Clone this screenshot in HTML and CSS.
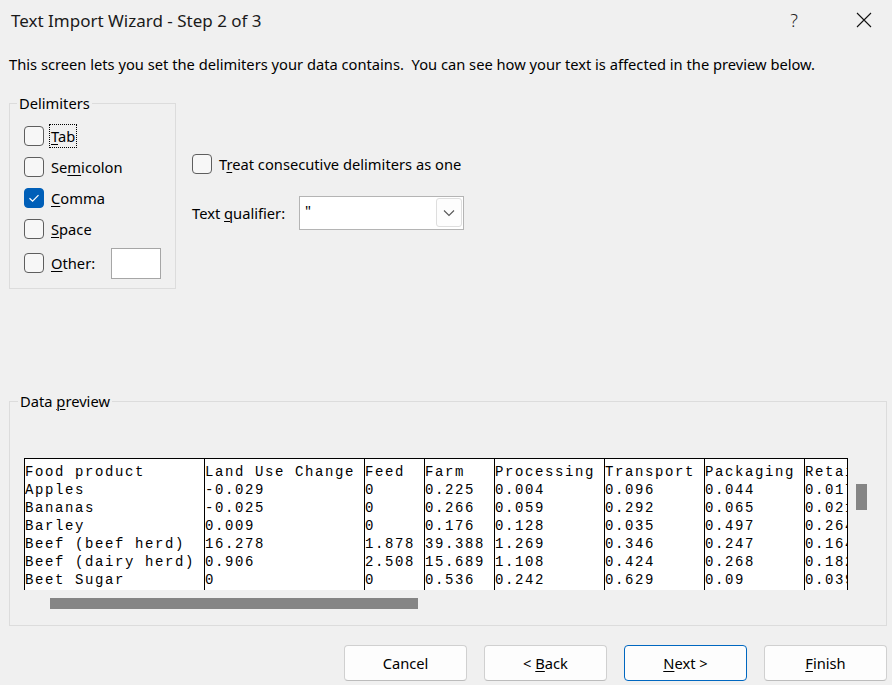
FILE: index.html
```html
<!DOCTYPE html>
<html>
<head>
<meta charset="utf-8">
<title>Text Import Wizard</title>
<link rel="stylesheet" href="styles.css">
</head>
<body>
<header class="titlebar">
  <span class="title">Text Import Wizard - Step 2 of 3</span>
  <div class="tb-buttons">
    <span class="tb-btn help">?</span>
    <span class="tb-btn">
      <svg class="close-icon" width="16" height="16" viewBox="0 0 16 16"><path d="M1 1L15 15M15 1L1 15"/></svg>
    </span>
  </div>
</header>

<p class="intro">This screen lets you set the delimiters your data contains.&nbsp; You can see how your text is affected in the preview below.</p>

<div class="options">
  <fieldset class="group delims">
    <legend>Delimiters</legend>
    <div class="group-body delims-body">
      <div class="row"><span class="cb"></span><span class="lbl focus"><u>T</u>ab</span></div>
      <div class="row"><span class="cb"></span><span class="lbl">Se<u>m</u>icolon</span></div>
      <div class="row"><span class="cb checked"><svg width="20" height="20" viewBox="0 0 20 20"><path d="M5.5 10.2L8.6 13.2L14.5 7.2"/></svg></span><span class="lbl"><u>C</u>omma</span></div>
      <div class="row"><span class="cb"></span><span class="lbl"><u>S</u>pace</span></div>
      <div class="row other-row"><span class="cb"></span><span class="lbl"><u>O</u>ther:</span><span class="textbox"></span></div>
    </div>
  </fieldset>

  <div class="right-col">
    <div class="row treat-row"><span class="cb"></span><span class="lbl">T<u>r</u>eat consecutive delimiters as one</span></div>
    <div class="qual-row">
      <span class="qual-label">Text <u>q</u>ualifier:</span>
      <div class="combo">
        <span class="combo-val">"</span>
        <span class="combo-drop"><svg width="12" height="8" viewBox="0 0 12 8"><path d="M1 1.5L6 6.5L11 1.5"/></svg></span>
      </div>
    </div>
  </div>
</div>

<fieldset class="group preview">
  <legend>Data <u>p</u>review</legend>
  <div class="group-body preview-body">
    <div class="preview-grid">
      <div class="table">
        <div class="col c1">Food product<br>Apples<br>Bananas<br>Barley<br>Beef (beef herd)<br>Beef (dairy herd)<br>Beet Sugar</div>
        <div class="col c2">Land Use Change<br>-0.029<br>-0.025<br>0.009<br>16.278<br>0.906<br>0</div>
        <div class="col c3">Feed<br>0<br>0<br>0<br>1.878<br>2.508<br>0</div>
        <div class="col c4">Farm<br>0.225<br>0.266<br>0.176<br>39.388<br>15.689<br>0.536</div>
        <div class="col c5">Processing<br>0.004<br>0.059<br>0.128<br>1.269<br>1.108<br>0.242</div>
        <div class="col c6">Transport<br>0.096<br>0.292<br>0.035<br>0.346<br>0.424<br>0.629</div>
        <div class="col c7">Packaging<br>0.044<br>0.065<br>0.497<br>0.247<br>0.268<br>0.09</div>
        <div class="col c8">Retail<br>0.017<br>0.021<br>0.264<br>0.164<br>0.182<br>0.039</div>
      </div>
      <div class="vscroll"><span class="vthumb"></span></div>
      <div class="hscroll"><span class="hthumb"></span></div>
    </div>
  </div>
</fieldset>

<footer class="buttons">
  <button class="btn">Cancel</button>
  <button class="btn">&lt; <u>B</u>ack</button>
  <button class="btn default"><u>N</u>ext &gt;</button>
  <button class="btn"><u>F</u>inish</button>
</footer>
</body>
</html>
```

FILE: styles.css
```css
* { box-sizing: border-box; }
html, body { margin: 0; padding: 0; }
body {
  width: 892px;
  height: 685px;
  overflow: hidden;
  background: #f0f0f0;
  font-family: "Noto Sans", "Open Sans", sans-serif;
  font-size: 14.7px;
  color: #000;
}
u { text-decoration: underline; text-underline-offset: 2px; text-decoration-thickness: 1px; }

.titlebar {
  height: 40px;
  display: flex;
  align-items: center;
  justify-content: space-between;
  padding-left: 11px;
  padding-right: 5px;
}
.title { font-size: 17px; color: #1a1a1a; }
.tb-buttons { display: flex; gap: 24px; }
.tb-btn {
  width: 46px;
  height: 40px;
  display: flex;
  align-items: center;
  justify-content: center;
}
.help { font-size: 18px; font-weight: 300; color: #222; }
.close-icon path { stroke: #111; stroke-width: 1.1; fill: none; }

.intro { margin: 14px 0 0 9px; line-height: 20px; }

.options {
  display: flex;
  align-items: flex-start;
  margin-top: 19px;
  padding-left: 9px;
}
fieldset.group {
  margin: 0;
  padding: 0;
  border: 1px solid #dcdcdc;
  min-width: 0;
}
fieldset.group legend {
  padding: 0 2px;
  margin-left: 7px;
  line-height: 20px;
}
fieldset.delims { width: 167px; }
.delims-body { padding: 7px 0 6px 14px; }

.row { display: flex; align-items: center; height: 31px; }
.other-row { height: 38px; }
.cb {
  width: 20px;
  height: 20px;
  flex: none;
  border: 1px solid #5e5e5e;
  border-radius: 4px;
  background: #f7f7f7;
}
.cb.checked {
  background: #005fb8;
  border-color: #005fb8;
  display: flex;
}
.cb.checked svg { display: block; margin: -1px; }
.cb.checked path { stroke: #fff; stroke-width: 1.2; fill: none; }
.lbl { margin-left: 7px; line-height: 20px; }
.focus { outline: 1px dotted #000; outline-offset: 1px; }
.textbox {
  width: 50px;
  height: 31px;
  margin-left: 16px;
  background: #fff;
  border: 1px solid #a6a6a6;
}

.right-col { margin-left: 16px; padding-top: 61px; }
.treat-row { height: 20px; }
.qual-row { display: flex; align-items: center; margin-top: 22px; height: 34px; }
.qual-label { width: 107px; }
.combo {
  width: 165px;
  height: 34px;
  background: #fff;
  border: 1px solid #b4b4b4;
  display: flex;
  align-items: flex-start;
  justify-content: space-between;
  padding: 1px 1px 0 5px;
}
.combo-val { line-height: 20px; margin-top: 2px; }
.combo-drop {
  width: 26px;
  height: 29px;
  border: 1px solid #dedede;
  border-radius: 3px;
  background: #fdfdfd;
  display: flex;
  align-items: center;
  justify-content: center;
}
.combo-drop path { stroke: #555; stroke-width: 1.1; fill: none; }

fieldset.preview { margin: 102px 5px 0 9px; width: 878px; }
fieldset.preview legend { margin-left: 8px; }
.preview-body { padding: 47px 0 16px 14px; }
.preview-grid {
  display: grid;
  grid-template-columns: 824px 1fr;
  grid-template-rows: 132px 19px;
}
.table {
  display: flex;
  height: 132px;
  overflow: hidden;
  background: #fff;
  border-top: 1px solid #000;
  border-right: 1px solid #000;
  font-family: "Liberation Mono", "DejaVu Sans Mono", monospace;
  font-size: 14px;
  letter-spacing: 1.6px;
  line-height: 18px;
  white-space: pre;
}
.col {
  flex: none;
  overflow: hidden;
  border-left: 1px solid #000;
  padding-top: 4px;
}
.c1 { width: 180px; }
.c2 { width: 160px; }
.c3 { width: 60px; }
.c4 { width: 70px; }
.c5 { width: 110px; }
.c6 { width: 100px; }
.c7 { width: 100px; }
.c8 { width: 43px; }
.vscroll { padding: 26px 0 0 8px; }
.vthumb { display: block; width: 11px; height: 26px; background: #858585; }
.hscroll { padding: 8px 0 0 26px; }
.hthumb { display: block; width: 368px; height: 11px; background: #858585; }

.buttons {
  display: flex;
  justify-content: flex-end;
  gap: 17px;
  padding-right: 5px;
  margin-top: 19px;
}
.btn {
  width: 123px;
  height: 36px;
  font-family: inherit;
  font-size: 14.7px;
  color: #000;
  background: #fdfdfd;
  border: 1px solid #d0d0d0;
  border-bottom-color: #bcbcbc;
  border-radius: 4px;
  padding: 0;
}
.btn.default { border-color: #0067c0; }
```
